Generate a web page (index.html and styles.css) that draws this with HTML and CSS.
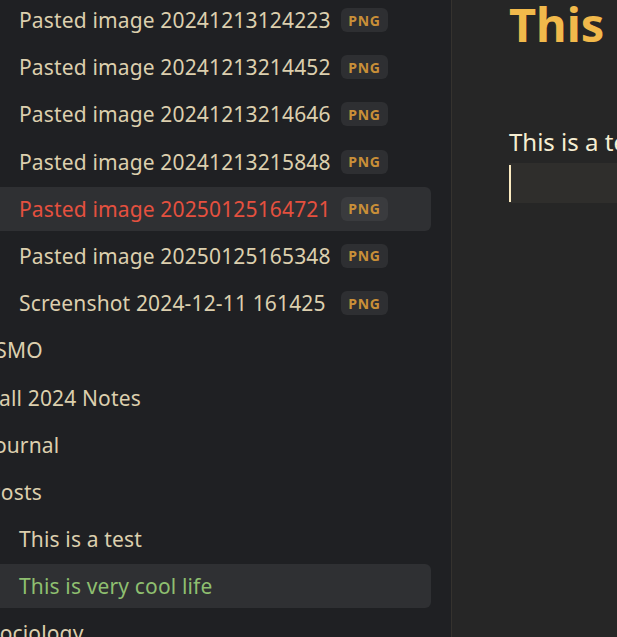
FILE: index.html
```html
<!DOCTYPE html>
<html lang="en">
<head>
<meta charset="utf-8">
<title>Vault</title>
<link rel="stylesheet" href="styles.css">
</head>
<body>
<div class="app">
  <aside class="sidebar">
    <ul class="tree">
      <li class="row file"><span class="name fixed">Pasted image 20241213124223</span><span class="badge">PNG</span></li>
      <li class="row file"><span class="name fixed">Pasted image 20241213214452</span><span class="badge">PNG</span></li>
      <li class="row file"><span class="name fixed">Pasted image 20241213214646</span><span class="badge">PNG</span></li>
      <li class="row file"><span class="name fixed">Pasted image 20241213215848</span><span class="badge">PNG</span></li>
      <li class="row file active-red"><span class="name fixed">Pasted image 20250125164721</span><span class="badge">PNG</span></li>
      <li class="row file"><span class="name fixed">Pasted image 20250125165348</span><span class="badge">PNG</span></li>
      <li class="row file"><span class="name fixed">Screenshot 2024-12-11 161425</span><span class="badge">PNG</span></li>
      <li class="row folder"><span class="name">ISMO</span></li>
      <li class="row folder"><span class="name">Fall 2024 Notes</span></li>
      <li class="row folder"><span class="name">Journal</span></li>
      <li class="row folder"><span class="name">Posts</span></li>
      <li class="row file"><span class="name">This is a test</span></li>
      <li class="row file active-green"><span class="name">This is very cool life</span></li>
      <li class="row folder"><span class="name">Sociology</span></li>
    </ul>
  </aside>
  <main class="editor">
    <h1 class="title">This is a test</h1>
    <p class="para">This is a test</p>
    <div class="line-active"><span class="cursor"></span></div>
  </main>
</div>
</body>
</html>
```
FILE: styles.css
```css
html, body {
  margin: 0;
  padding: 0;
  height: 100%;
  overflow: hidden;
  background: #262626;
}
.app {
  display: flex;
  height: 637px;
  font-family: "Noto Sans", "Open Sans", sans-serif;
}
.sidebar {
  width: 451px;
  flex: none;
  background: #1f2023;
  border-right: 1px solid #35322e;
  overflow: hidden;
}
.tree {
  list-style: none;
  margin: -2px 20px 0 -40px;
  padding: 0;
  display: flex;
  flex-direction: column;
  gap: 3.2px;
}
.row {
  height: 44px;
  display: flex;
  align-items: center;
  gap: 11px;
  padding-left: 29px;
  border-radius: 6px;
  white-space: nowrap;
  font-size: 21px;
  letter-spacing: 0.15px;
  color: #dccfae;
}
.row.folder {
  padding-left: 28px;
}
.row.file {
  padding-left: 59px;
}
.name.fixed {
  flex: none;
  width: 311px;
}
.active-red {
  background: #2f3033;
  color: #e5503f;
}
.active-green {
  background: #2f3033;
  color: #8ebf70;
}
.badge {
  flex: none;
  display: inline-flex;
  align-items: center;
  justify-content: center;
  height: 24px;
  width: 47px;
  border-radius: 6px;
  background: #2e2f32;
  color: #c98f38;
  font-size: 14px;
  font-weight: 700;
  letter-spacing: 0.8px;
}
.active-red .badge {
  background: #3a3b3e;
}
.editor {
  flex: 1;
  background: #262626;
  padding-left: 57px;
  overflow: hidden;
  white-space: nowrap;
}
.title {
  margin: -6px 0 0 0;
  font-size: 47px;
  font-weight: 700;
  color: #f1b94b;
  line-height: 60px;
}
.para {
  margin: 73px 0 0 0;
  font-size: 24px;
  line-height: 30px;
  color: #f6eed2;
}
.line-active {
  margin-top: 6px;
  height: 40px;
  background: #2f2e2c;
  display: flex;
  align-items: center;
}
.cursor {
  width: 2px;
  height: 37px;
  background: #fbeac0;
}
```
